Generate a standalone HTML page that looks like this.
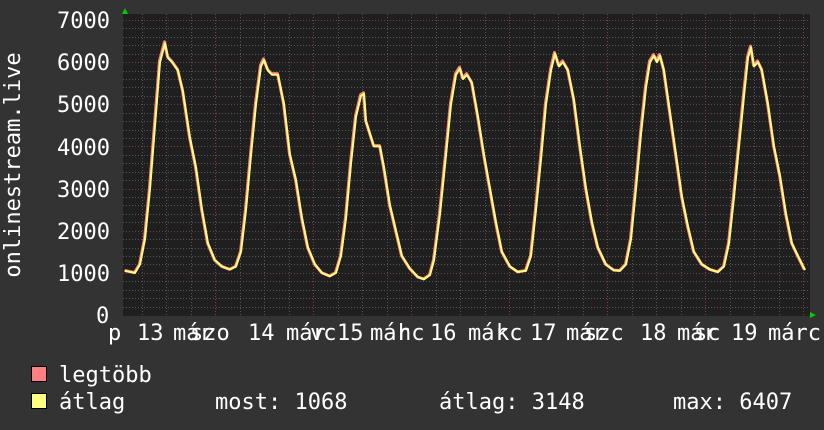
<!DOCTYPE html>
<html><head><meta charset="utf-8"><style>
html,body{margin:0;padding:0;background:#333;}
svg{display:block}
text{font-family:"DejaVu Sans Mono","Liberation Mono",monospace;fill:#fff;font-size:22px}
</style></head><body>
<svg width="824" height="430" viewBox="0 0 824 430" xmlns="http://www.w3.org/2000/svg">
<rect width="824" height="430" fill="#333"/>
<rect x="123" y="14" width="687" height="302" fill="#1f1f1f"/>
<g id="grid"></g>
<polyline id="mx" fill="none" stroke="#ff8080" stroke-width="3" stroke-linejoin="round"/>
<polyline id="av" fill="none" stroke="#ffff80" stroke-width="2" stroke-linejoin="round"/>
<polygon points="122,14 125,8 128,14" fill="#0c0"/>
<polygon points="810,312 816,315 810,318" fill="#0c0"/>
<g>
<text x="57" y="28">7000</text>
<text x="57" y="70">6000</text>
<text x="57" y="112">5000</text>
<text x="57" y="155">4000</text>
<text x="57" y="197">3000</text>
<text x="57" y="239">2000</text>
<text x="57" y="281">1000</text>
<text x="96" y="323">0</text>
</g>
<text transform="translate(20,165) rotate(-90)" text-anchor="middle">onlinestream.live</text>
<g>
<text x="108" y="340">p</text>
<text x="137" y="340">13</text><text x="173" y="340">már</text><text x="190" y="340">szo</text>
<text x="248" y="340">14</text><text x="286" y="340">már</text><text x="310" y="340">vc</text>
<text x="337" y="340">15</text><text x="370" y="340">már</text><text x="398" y="340">hc</text>
<text x="430" y="340">16</text><text x="468" y="340">már</text><text x="496" y="340">kc</text>
<text x="530" y="340">17</text><text x="566" y="340">már</text><text x="584" y="340">szc</text>
<text x="640" y="340">18</text><text x="677" y="340">már</text><text x="694" y="340">sc</text>
<text x="731" y="340">19</text><text x="768" y="340">márc</text>
</g>
<rect x="31.5" y="366.5" width="15" height="15" fill="#ff8080" stroke="#000"/>
<rect x="31.5" y="393.5" width="15" height="15" fill="#ffff80" stroke="#000"/>
<text x="59" y="382">legtöbb</text>
<text x="59" y="409">átlag</text>
<text x="215" y="409">most: 1068</text>
<text x="439" y="409">átlag: 3148</text>
<text x="673" y="409">max: 6407</text>
</svg>
<script>
var g=document.getElementById('grid'),s='';
function Y(v){return 315-v*0.04214;}
for(var v=200;v<=7000;v+=200){var y=Math.round(Y(v))+0.5;var maj=v%1000==0;
s+='<line x1="123" x2="810" y1="'+y+'" y2="'+y+'" stroke="'+(maj?'#6a4444':'#555')+'" stroke-width="1" stroke-dasharray="1,2"/>';}
for(var x=215-98*4;x<810;x+=24.5){if(x<124)continue;var xx=Math.round(x)+0.5;var maj=Math.abs(((x-215)%98+98)%98)<0.1;
s+='<line x1="'+xx+'" x2="'+xx+'" y1="14" y2="316" stroke="'+(maj?'#7a4444':'#555')+'" stroke-width="1" stroke-dasharray="1,2"/>';}
g.innerHTML=s;
var d=[125,1050,135,1000,140,1200,145,1800,150,3000,155,4500,160,6000,165,6450,168,6100,172,6000,178,5800,183,5300,190,4200,196,3500,202,2500,208,1700,215,1300,222,1150,230,1080,236,1150,241,1500,246,2500,251,3800,256,5000,261,5900,264,6050,268,5800,272,5700,278,5700,284,5000,290,3800,296,3200,302,2300,308,1600,315,1200,322,1000,330,920,336,1000,341,1400,346,2300,351,3600,356,4700,361,5200,364,5250,366,4600,370,4300,374,4000,380,4000,384,3500,390,2600,396,2000,402,1400,410,1100,418,900,424,850,430,950,434,1300,440,2400,446,3800,451,5000,456,5700,460,5850,463,5600,467,5700,472,5500,478,4700,484,3800,490,3000,496,2200,502,1500,510,1150,518,1020,526,1050,531,1400,536,2500,541,3700,546,5000,551,5800,555,6200,559,5900,563,6000,568,5800,574,5100,580,4000,586,3000,592,2200,598,1600,606,1200,614,1060,620,1050,626,1200,631,1800,636,3000,641,4300,646,5400,650,6000,654,6150,657,6000,660,6150,664,5800,670,4800,676,3800,682,2800,688,2100,694,1500,702,1200,710,1080,718,1020,724,1150,729,1700,734,2800,739,4000,744,5200,748,6100,751,6350,754,5900,758,6000,762,5800,768,5000,774,4000,780,3300,786,2400,792,1700,798,1400,805,1068];
var p='',q='';for(var i=0;i<d.length;i+=2){p+=d[i]+','+Y(d[i+1]).toFixed(1)+' ';q+=(d[i]-0.5)+','+Y(d[i+1]*1.005).toFixed(1)+' ';}
document.getElementById('av').setAttribute('points',p);
document.getElementById('mx').setAttribute('points',q);
</script>
</body></html>
